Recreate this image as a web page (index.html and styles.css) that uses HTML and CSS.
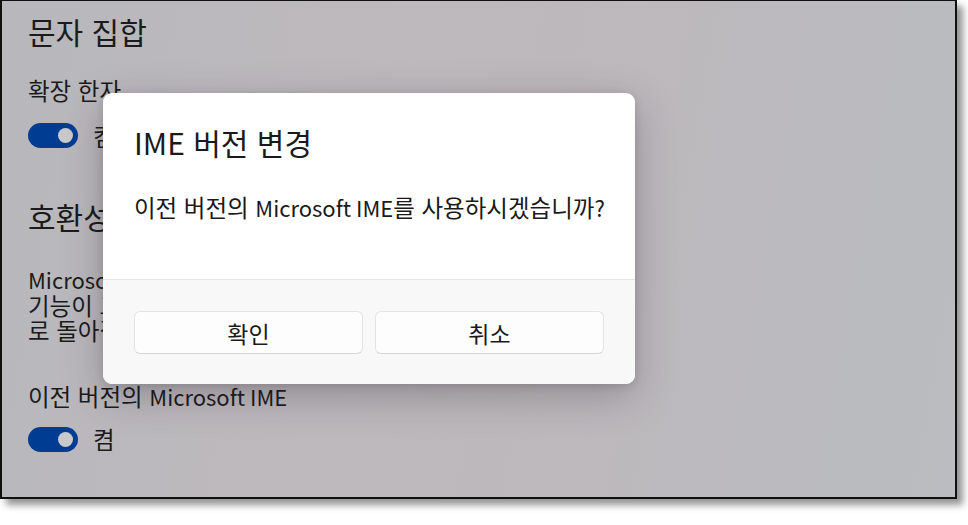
FILE: index.html
```html
<!DOCTYPE html>
<html lang="ko">
<head>
<meta charset="utf-8">
<title>IME 버전 변경</title>
<link rel="stylesheet" href="styles.css">
</head>
<body>
<div class="frame">
  <main class="settings">
    <h2 class="section-title">문자 집합</h2>
    <div class="label first-label">확장 한자</div>
    <div class="toggle-row">
      <span class="toggle"><span class="knob"></span></span>
      <span class="state">켬</span>
    </div>

    <h2 class="section-title second">호환성</h2>
    <p class="desc"><span class="en" lang="en">Microsoft IME</span>가 새 버전으로 업데이트되었습니다. 일부<br>기능이 그대로 작동하지 않는 경우 이전 버전으<br>로 돌아갈 수 있습니다.</p>
    <div class="label">이전 버전의 <span class="en" lang="en">Microsoft IME</span></div>
    <div class="toggle-row second-toggle">
      <span class="toggle"><span class="knob"></span></span>
      <span class="state">켬</span>
    </div>
  </main>

  <div class="dialog" role="dialog">
    <div class="dialog-body">
      <h1 class="dialog-title">IME 버전 변경</h1>
      <p class="dialog-text">이전 버전의 <span class="en" lang="en">Microsoft IME</span>를 사용하시겠습니까<span class="en">?</span></p>
    </div>
    <div class="dialog-footer">
      <button class="btn">확인</button>
      <button class="btn">취소</button>
    </div>
  </div>
</div>
</body>
</html>
```
FILE: styles.css
```css
html, body {
  margin: 0;
  padding: 0;
  background: #ffffff;
}

body {
  font-family: "Noto Sans CJK KR", sans-serif;
  color: #1b1b1b;
  width: 968px;
  height: 525px;
  overflow: hidden;
}

.frame {
  position: relative;
  box-sizing: border-box;
  width: 957px;
  height: 499px;
  border: 2px solid #101010;
  border-top-width: 1px;
  background:
    radial-gradient(ellipse 420px 260px at 370px 250px, rgba(140,120,130,0.10), rgba(140,120,130,0) 70%),
    linear-gradient(100deg, #b7b7bc 0%, #bcb9bd 25%, #bdb8bb 55%, #bbbabe 80%, #b9bcc0 100%);
  box-shadow: 6px 6px 7px rgba(0, 0, 0, 0.42);
  overflow: hidden;
}

.settings {
  display: flex;
  flex-direction: column;
  align-items: flex-start;
  padding: 12px 0 0 26px;
}

.section-title {
  margin: 0;
  font-size: 30px;
  font-weight: 400;
  line-height: 36px;
}

.section-title.second {
  margin-top: 50px;
}

.en {
  font-size: 22px;
}

.label {
  margin-top: 39px;
  font-size: 23.5px;
  line-height: 26px;
}

.first-label {
  margin-top: 28px;
}

.toggle-row {
  display: flex;
  align-items: center;
  gap: 15px;
  margin-top: 20px;
  height: 25px;
}

.second-toggle {
  margin-top: 18px;
}

.toggle {
  box-sizing: border-box;
  display: flex;
  align-items: center;
  justify-content: flex-end;
  width: 50px;
  height: 25px;
  padding-right: 5px;
  border-radius: 13px;
  background: #003c91;
}

.knob {
  width: 15px;
  height: 15px;
  border-radius: 50%;
  background: #c9c9cc;
}

.state {
  font-size: 23.5px;
  line-height: 26px;
}

.desc {
  margin: 33px 0 0;
  font-size: 23.5px;
  line-height: 25.5px;
  white-space: nowrap;
}

.dialog {
  position: absolute;
  left: 101px;
  top: 92px;
  width: 532px;
  border-radius: 9px;
  background: #ffffff;
  overflow: hidden;
  box-shadow: 0 12px 40px rgba(40, 30, 40, 0.28), 0 2px 8px rgba(0, 0, 0, 0.12);
  color: #1a1a1a;
}

.dialog-body {
  padding: 30px 31px 58px;
}

.dialog-title {
  margin: 0;
  font-size: 30px;
  font-weight: 400;
  line-height: 38px;
}

.dialog-text {
  margin: 32px 0 0;
  font-size: 23.5px;
  line-height: 28px;
  white-space: nowrap;
}

.dialog-footer {
  display: grid;
  grid-template-columns: 1fr 1fr;
  gap: 12px;
  padding: 31px 31px 30px;
  background: #f8f8f8;
  border-top: 1px solid #e7e7e7;
}

.btn {
  height: 43px;
  border: 1px solid #e4e4e4;
  border-bottom-color: #d6d6d6;
  border-radius: 6px;
  background: #fdfdfd;
  font-family: "Noto Sans CJK KR", sans-serif;
  font-size: 23px;
  line-height: 28px;
  color: #1a1a1a;
  padding: 0;
}
```
